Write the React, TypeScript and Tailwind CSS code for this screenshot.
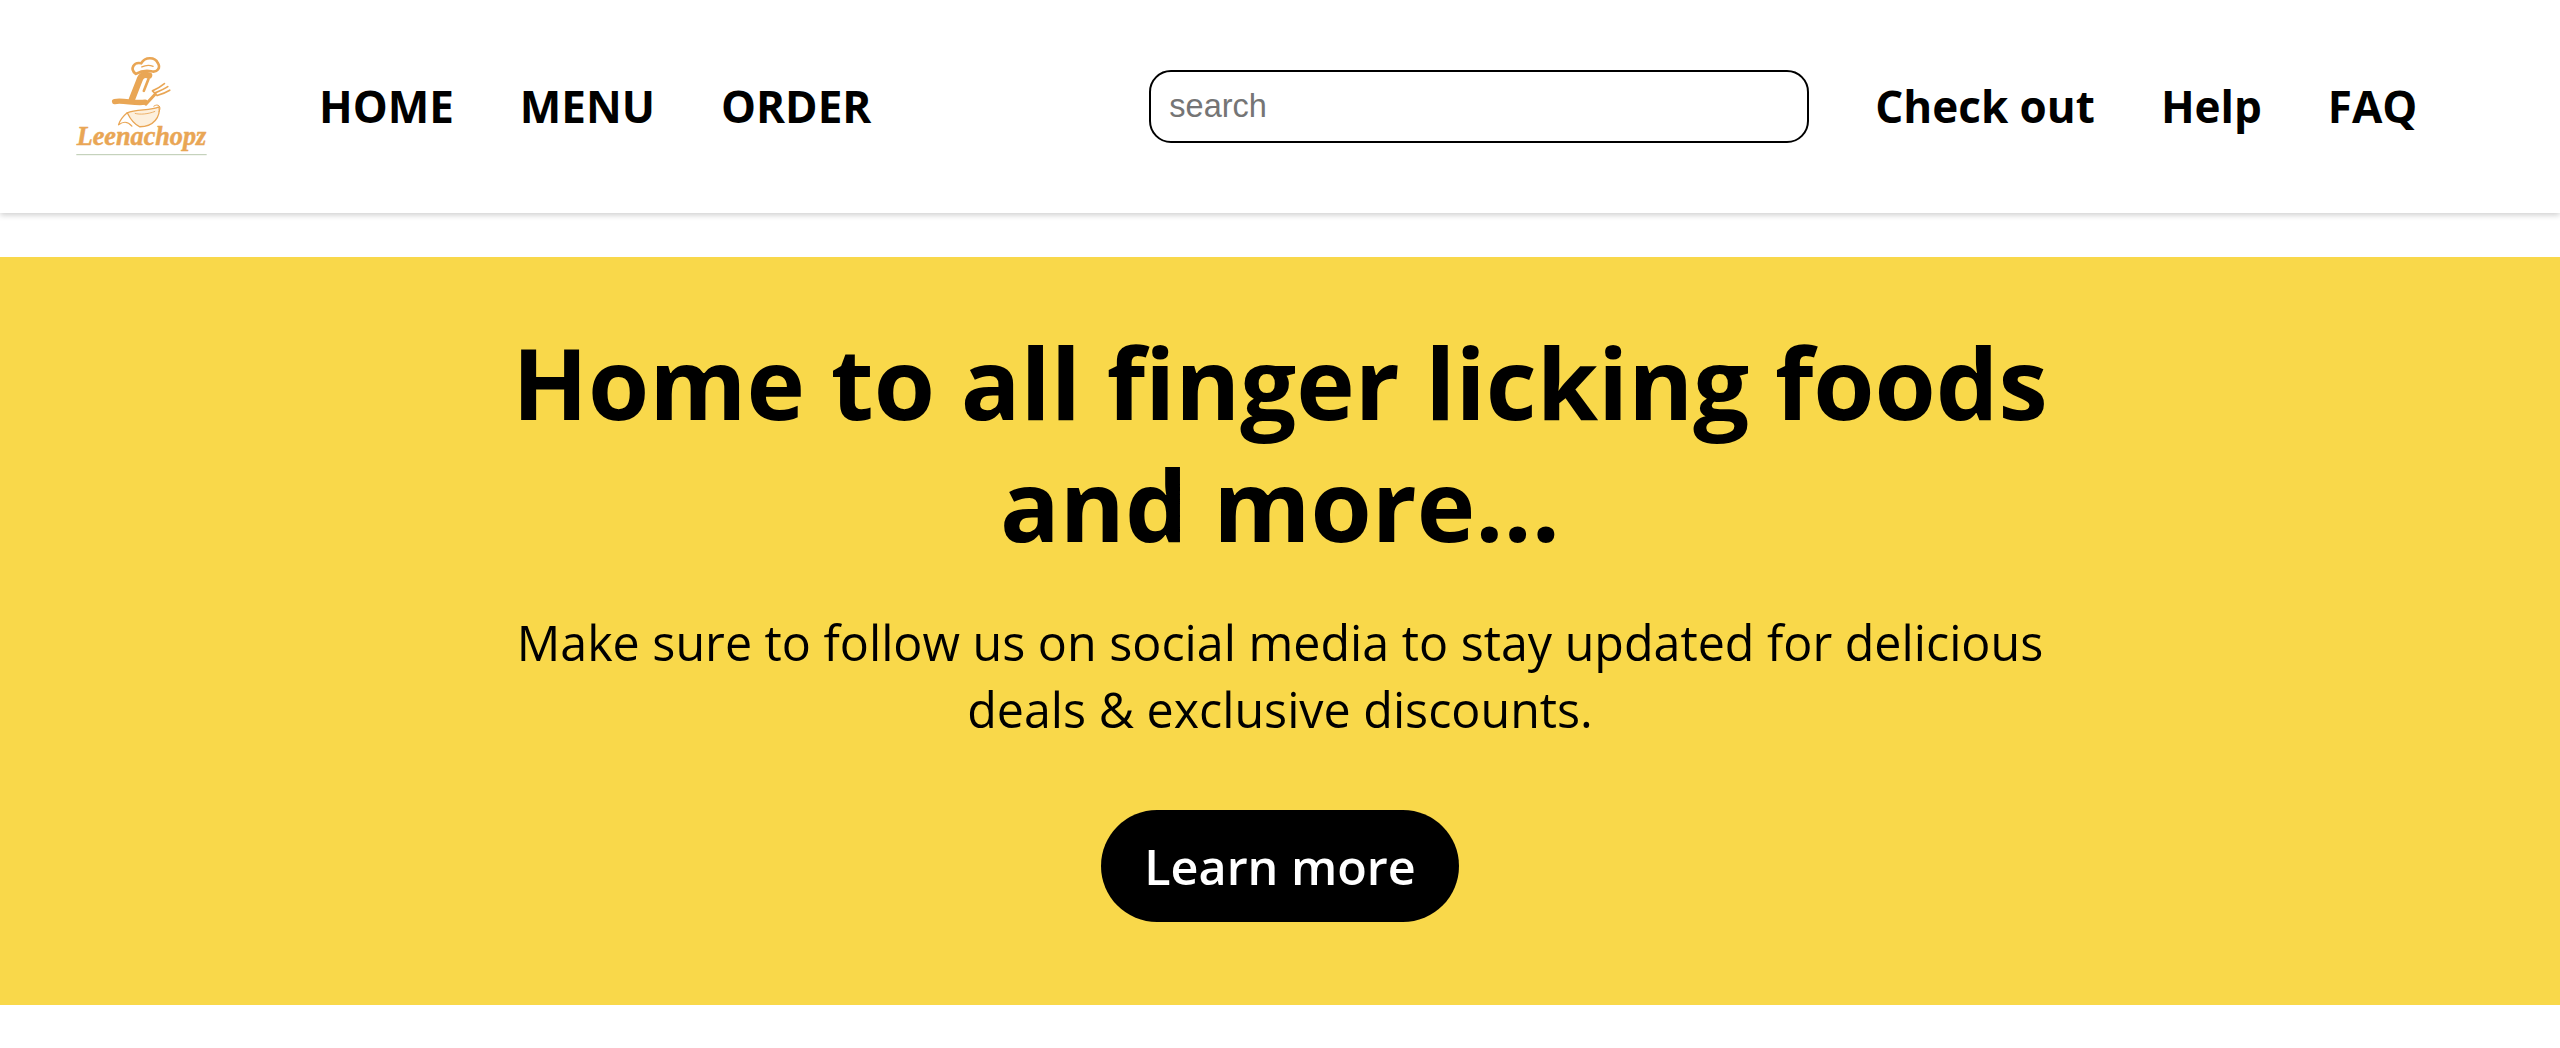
const Logo = () => (
  <svg className="ml-[-3px] mt-[-1px] shrink-0" width="137" height="103" viewBox="100 70 410 310" fill="none" stroke="#e9a655" strokeLinecap="round" strokeLinejoin="round">
    <path d="M288 127C268 112 282 90 304 95C316 74 346 76 354 94C364 108 352 124 334 119C318 116 302 119 288 127Z" strokeWidth="8" fill="#fff" />
    <path d="M306 106C318 100 330 100 340 104" strokeWidth="4" />
    <path d="M328 132C310 126 302 134 298 148L276 204" strokeWidth="19" />
    <path d="M326 142L312 178" strokeWidth="8" />
    <path d="M224 210C250 205 285 217 316 212" strokeWidth="16" />
    <path d="M318 218L346 188" strokeWidth="9" />
    <path d="M338 178C352 172 364 164 374 156M346 184C360 178 374 172 384 165M352 192C366 188 380 182 390 176M338 178L352 192" strokeWidth="5" />
    <path d="M262 244C290 232 330 238 358 226C362 256 342 286 300 286C284 280 272 264 262 244Z" strokeWidth="4" fill="#fdf0dd" />
    <path d="M262 244C250 254 240 266 236 280C250 270 262 268 276 284" strokeWidth="4" />
    <path d="M286 246C300 250 325 248 345 240" strokeWidth="2.5" />
    <path d="M342 224C356 214 366 226 358 240" strokeWidth="3" />
    <text x="110" y="342" stroke="#e9a655" strokeWidth="1.5" fill="#e9a655" fontFamily="'Liberation Serif', serif" fontStyle="italic" fontWeight="700" fontSize="80" textLength="390" lengthAdjust="spacingAndGlyphs">Leenachopz</text>
    <path d="M110 370H500" stroke="#b9c9ae" strokeWidth="3" />
  </svg>
);

export default function App() {
  return (
    <div className="min-h-[1048px] bg-white font-['Open_Sans',sans-serif] text-black">
      <header className="flex h-[213px] items-center bg-white pl-[76px] shadow-[0_2px_6px_rgba(0,0,0,0.2)]">
        <Logo />
        <nav className="mb-[2px] ml-[109px] flex gap-[66px] text-[44px] font-bold leading-none">
          <a>HOME</a>
          <a>MENU</a>
          <a>ORDER</a>
        </nav>
        <input
          placeholder="search"
          className="ml-[278px] h-[73px] w-[660px] rounded-[22px] border-2 border-black px-[18px] font-['Liberation_Sans',sans-serif] text-[32.5px] placeholder:text-[#757575]"
        />
        <nav className="mb-[2px] ml-[66px] flex gap-[66px] text-[44px] font-bold leading-none">
          <a>Check out</a>
          <a>Help</a>
          <a>FAQ</a>
        </nav>
      </header>
      <section className="mt-[44px] flex h-[748px] flex-col items-center bg-[#f9d84a] pt-[64px] text-center">
        <h1 className="w-[1600px] text-[99px] font-bold leading-[122px]">
          Home to all finger licking foods and more...
        </h1>
        <p className="mt-[44px] w-[1600px] text-[48.4px] leading-[67px]">
          Make sure to follow us on social media to stay updated for delicious deals &amp; exclusive discounts.
        </p>
        <button className="mt-[67px] flex h-[112px] w-[358px] items-center justify-center rounded-[56px] bg-black text-[48.5px] font-semibold text-white">
          Learn more
        </button>
      </section>
    </div>
  );
}
